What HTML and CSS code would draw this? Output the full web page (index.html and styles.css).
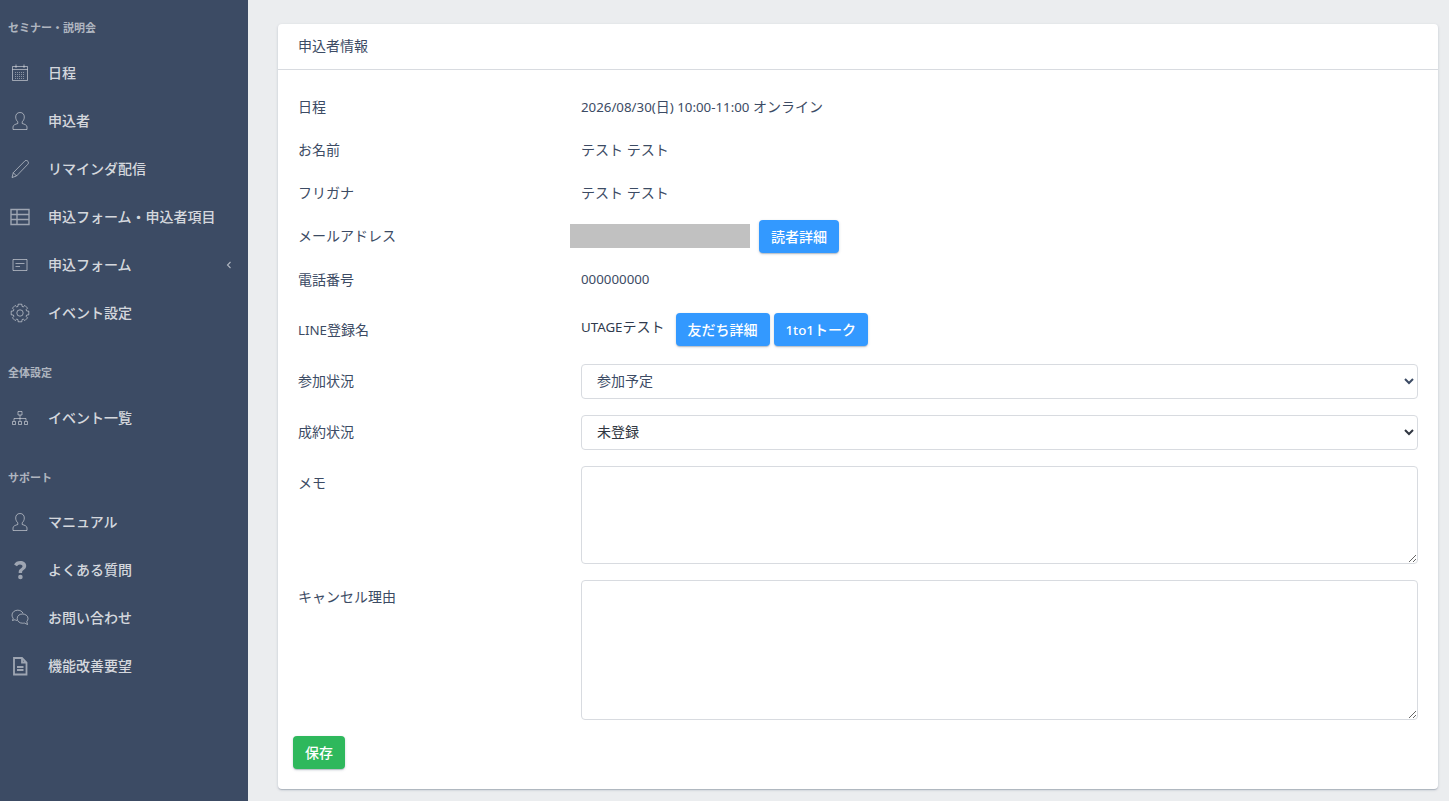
FILE: index.html
```html
<!DOCTYPE html>
<html lang="ja">
<head>
    <meta charset="UTF-8">
    <meta name="viewport" content="width=device-width, initial-scale=1.0">
    <title>申込者情報</title>
    <link rel="stylesheet" href="styles.css">
</head>
<body>
    <aside class="sidebar">
        <div class="nav-title nav-title-first">セミナー・説明会</div>
        <a class="nav-item">
            <svg class="nav-icon" viewBox="0 0 20 20"><path d="M2.500 3.500h15v14h-15zM2.500 6.500h15M6 1.500v3.500M14 1.500v3.500"/><path class="dots" d="M5 9.500h10M5 11.500h10M5 13.500h10M5 15.500h10"/></svg>
            <span>日程</span>
        </a>
        <a class="nav-item">
            <svg class="nav-icon" viewBox="0 0 20 20"><path d="M10 1.500c-2.800 0-4.300 1.900-4.300 4.500 0 2.100.9 3.700 2.100 4.800v1.700c-2.500.7-4.800 1.700-4.800 3.400v2.600h14v-2.600c0-1.700-2.300-2.700-4.800-3.400v-1.700c1.200-1.100 2.100-2.700 2.100-4.800 0-2.600-1.500-4.500-4.300-4.500z"/></svg>
            <span>申込者</span>
        </a>
        <a class="nav-item">
            <svg class="nav-icon" viewBox="0 0 20 20"><path d="M15 1.800c1-.6 2.300-.3 3 .6.700 1 .5 2.200-.3 3L6.500 17 2 18.500l1.300-4.800z"/><path d="M3.300 13.700l3.200 3.300"/></svg>
            <span>リマインダ配信</span>
        </a>
        <a class="nav-item">
            <svg class="nav-icon nav-icon-table" viewBox="0 0 20 20"><path d="M1 2.500h18v15H1zM1 7.500h18M1 12.500h18M7 2.500v15"/></svg>
            <span>申込フォーム・申込者項目</span>
        </a>
        <a class="nav-item">
            <svg class="nav-icon" viewBox="0 0 20 20"><path d="M3 4.500h14v11H3zM5.500 8.500h9M5.500 11.500h4.500"/></svg>
            <span>申込フォーム</span>
            <svg class="nav-caret" viewBox="0 0 6 8"><path d="M4.500 1L1.500 4l3 3"/></svg>
        </a>
        <a class="nav-item">
            <svg class="nav-icon" viewBox="0 0 20 20"><circle cx="10" cy="10" r="3.200"/><path d="M7.980 3.400L8.130 1.200H11.870L12.020 3.400L13.240 3.910L14.900 2.450L17.550 5.100L16.090 6.760L16.600 7.980L18.800 8.130V11.870L16.600 12.020L16.090 13.240L17.550 14.900L14.900 17.550L13.240 16.090L12.020 16.600L11.870 18.800H8.130L7.980 16.600L6.760 16.090L5.100 17.550L2.450 14.900L3.910 13.240L3.400 12.020L1.200 11.870V8.130L3.400 7.980L3.910 6.760L2.450 5.100L5.100 2.450L6.760 3.910z"/></svg>
            <span>イベント設定</span>
        </a>

        <div class="nav-title">全体設定</div>
        <a class="nav-item">
            <svg class="nav-icon" viewBox="0 0 20 20"><path d="M8 3.500h4v3.500H8zM10 7v3.500M4 13v-2.500h12V13M10 10.500V13M2.500 13.500h3v3h-3zM8.500 13.500h3v3h-3zM14.500 13.500h3v3h-3z"/></svg>
            <span>イベント一覧</span>
        </a>

        <div class="nav-title nav-title-support">サポート</div>
        <a class="nav-item">
            <svg class="nav-icon" viewBox="0 0 20 20"><path d="M10 1.500c-2.800 0-4.300 1.900-4.300 4.500 0 2.100.9 3.700 2.100 4.800v1.700c-2.500.7-4.800 1.700-4.800 3.400v2.600h14v-2.600c0-1.700-2.300-2.700-4.800-3.400v-1.700c1.200-1.100 2.100-2.700 2.100-4.800 0-2.600-1.500-4.500-4.300-4.500z"/></svg>
            <span>マニュアル</span>
        </a>
        <a class="nav-item">
            <svg class="nav-icon nav-icon-solid" viewBox="0 0 20 20"><path d="M8.700 13h3.400v-.9c0-1 .6-1.500 1.500-2.200 1.200-.9 2.600-2 2.600-4C16.200 2.900 13.500 1 10.300 1 7.500 1 5.300 2.200 4.100 4.400l2.800 1.900c.7-1.100 1.500-1.900 3.100-1.900 1.400 0 2.500.7 2.500 1.800 0 .9-.6 1.400-1.400 2-1.300.9-2.400 2-2.400 3.900z"/><circle cx="10.400" cy="17" r="2.300"/></svg>
            <span>よくある質問</span>
        </a>
        <a class="nav-item">
            <svg class="nav-icon" viewBox="0 0 20 20"><path d="M7 12.500c-.8-.2-1.500-.4-2.100-.8l-2.400.8.700-2.200C2.400 9.300 2 8.200 2 7c0-2.800 2.700-4.800 5.700-4.800 2.400 0 4.500 1.200 5.300 3.100"/><path d="M12.500 6c3 0 5.500 1.800 5.500 4.500 0 1.100-.4 2.100-1.200 2.900l.7 3.100-3.200-1.500c-.6.200-1.200.2-1.800.2-3 0-5.300-1.900-5.300-4.700S9.500 6 12.500 6z"/></svg>
            <span>お問い合わせ</span>
        </a>
        <a class="nav-item">
            <svg class="nav-icon nav-icon-thick" viewBox="0 0 20 20"><path d="M4 2h8l4.500 4.500V18.500H4zM12 2v4.500h4.500"/><path d="M7 11h6.500M7 14h6.500"/></svg>
            <span>機能改善要望</span>
        </a>
    </aside>

    <main class="content">
        <section class="card">
            <div class="card-header">申込者情報</div>
            <div class="card-body">
                <div class="info-row">
                    <div class="label">日程</div>
                    <div class="value"><span class="latin">2026/08/30(</span>日<span class="latin">) 10:00-11:00</span> オンライン</div>
                </div>
                <div class="info-row">
                    <div class="label">お名前</div>
                    <div class="value">テスト テスト</div>
                </div>
                <div class="info-row">
                    <div class="label">フリガナ</div>
                    <div class="value">テスト テスト</div>
                </div>
                <div class="info-row info-row-mail">
                    <div class="label">メールアドレス</div>
                    <div class="value value-inline">
                        <div class="redacted"></div>
                        <button class="btn btn-blue">読者詳細</button>
                    </div>
                </div>
                <div class="info-row">
                    <div class="label">電話番号</div>
                    <div class="value latin">000000000</div>
                </div>
                <div class="info-row info-row-line">
                    <div class="label label-raised"><span class="latin">LINE</span>登録名</div>
                    <div class="value value-inline">
                        <span class="line-name"><span class="latin">UTAGE</span>テスト</span>
                        <button class="btn btn-blue">友だち詳細</button>
                        <button class="btn btn-blue"><span class="latin">1to1</span>トーク</button>
                    </div>
                </div>
                <div class="form-row">
                    <div class="label">参加状況</div>
                    <select class="field">
                        <option>参加予定</option>
                    </select>
                </div>
                <div class="form-row">
                    <div class="label">成約状況</div>
                    <select class="field field-dark">
                        <option>未登録</option>
                    </select>
                </div>
                <div class="form-row">
                    <div class="label">メモ</div>
                    <textarea class="field area-memo"></textarea>
                </div>
                <div class="form-row">
                    <div class="label">キャンセル理由</div>
                    <textarea class="field area-cancel"></textarea>
                </div>
                <button class="btn btn-green">保存</button>
            </div>
        </section>
    </main>
</body>
</html>
```

FILE: styles.css
```css
* {
    box-sizing: border-box;
}
body {
    margin: 0;
    height: 801px;
    overflow: hidden;
    display: flex;
    background-color: #ebedef;
    color: #3c4b64;
    font-family: "Noto Sans", "Noto Sans CJK JP", sans-serif;
    font-size: 14px;
}
.latin {
    font-size: 13.3px;
}
.sidebar {
    width: 248px;
    flex-shrink: 0;
    background-color: #3c4b64;
    color: rgba(255, 255, 255, 0.8);
}
.nav-title {
    height: 21px;
    margin-top: 25px;
    margin-bottom: 11px;
    padding-left: 8px;
    font-size: 11px;
    font-weight: 700;
    line-height: 22px;
    color: rgba(255, 255, 255, 0.6);
}
.nav-title-first {
    margin-top: 17px;
}
.nav-title-support {
    margin-bottom: 10px;
}
.nav-item {
    display: flex;
    align-items: center;
    height: 48px;
    padding-left: 10px;
    padding-right: 16px;
    font-weight: 500;
}
.nav-item span {
    margin-bottom: 2px;
}
.nav-icon {
    width: 20px;
    height: 20px;
    margin-right: 18px;
    fill: none;
    stroke: rgba(255, 255, 255, 0.5);
    stroke-width: 1;
}
.nav-icon-table {
    stroke-width: 1.4;
}
.nav-icon-solid {
    fill: rgba(255, 255, 255, 0.5);
    stroke: none;
}
.nav-icon-thick {
    stroke-width: 1.8;
}
.dots {
    stroke-width: 0.8;
    stroke-dasharray: 1 1;
}
.nav-caret {
    width: 6px;
    height: 8px;
    margin-left: auto;
    fill: none;
    stroke: rgba(255, 255, 255, 0.6);
    stroke-width: 1.1;
}
.content {
    flex: 1;
    padding: 24px 11px 12px 30px;
}
.card {
    height: 765px;
    background-color: #fff;
    border-radius: 4px;
    box-shadow: 0 1px 1px 0 rgba(60, 75, 100, 0.14), 0 2px 1px -1px rgba(60, 75, 100, 0.12), 0 1px 3px 0 rgba(60, 75, 100, 0.2);
}
.card-header {
    height: 46px;
    padding: 0 20px;
    line-height: 43px;
    border-bottom: 1px solid #d8dbe0;
}
.card-body {
    padding: 14px 20px 0;
}
.info-row {
    display: grid;
    grid-template-columns: 283px 1fr;
    align-items: center;
    height: 43px;
}
.info-row-mail {
    height: 44px;
}
.info-row-mail .value {
    padding-top: 3px;
}
.info-row-line {
    height: 33px;
    margin-top: 13px;
    margin-bottom: 18px;
}
.label-raised {
    padding-bottom: 2px;
}
.form-row {
    display: grid;
    grid-template-columns: 283px 1fr;
    margin-bottom: 16px;
}
.form-row .label {
    padding-top: 6px;
    line-height: 21px;
}
.value-inline {
    display: flex;
    align-items: center;
}
.redacted {
    width: 180px;
    height: 24px;
    margin-left: -11px;
    margin-right: 9px;
    margin-bottom: 1px;
    background-color: #c1c1c1;
}
.line-name {
    margin-right: 11px;
    margin-bottom: 7px;
    color: #2f3a4d;
}
.btn {
    height: 33px;
    padding: 0 12px 2px;
    border: 0;
    border-radius: 4px;
    color: #fff;
    font-family: inherit;
    font-size: 14px;
    font-weight: 500;
    box-shadow: 0 1px 1px 0 rgba(60, 75, 100, 0.14), 0 2px 1px -1px rgba(60, 75, 100, 0.12), 0 1px 3px 0 rgba(60, 75, 100, 0.2);
}
.btn + .btn {
    margin-left: 4px;
}
.btn-blue {
    background-color: #3399ff;
}
.btn-green {
    margin-left: -5px;
    background-color: #2eb85c;
}
.field {
    display: block;
    width: 100%;
    border: 1px solid #d8dbe0;
    border-radius: 4px;
    background-color: #fff;
    color: #3c4b64;
    font-family: inherit;
    font-size: 14px;
}
.field-dark {
    color: #303641;
}
select.field {
    height: 35px;
    padding: 0 11px 2px;
}
.area-memo {
    height: 98px;
}
.area-cancel {
    height: 140px;
}
```
